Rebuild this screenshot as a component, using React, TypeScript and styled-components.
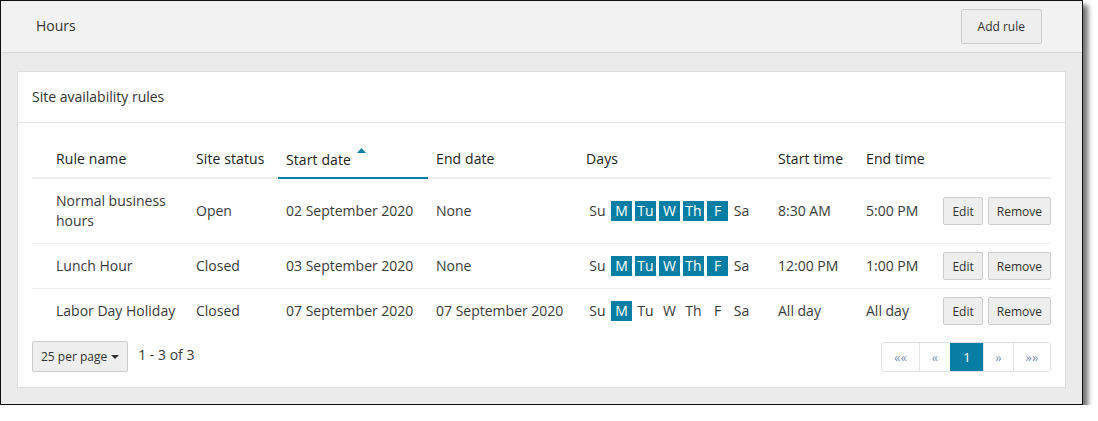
import React from "react";
import styled, { createGlobalStyle } from "styled-components";

const GlobalStyle = createGlobalStyle`
  html, body { margin: 0; padding: 0; background: #ffffff; }
  body { font-family: "Open Sans", "Noto Sans", Arial, sans-serif; color: #333; }
  * { box-sizing: border-box; }
`;

const TEAL = "#087ea4";

const Frame = styled.div`
  width: 1083px;
  height: 405px;
  border: 1px solid #111;
  background: #ebebeb;
  box-shadow: 5px 5px 5px rgba(0, 0, 0, 0.55);
  display: flex;
  flex-direction: column;
`;

const TopBar = styled.header`
  height: 52px;
  flex: none;
  background: #f2f2f2;
  border-bottom: 1px solid #d6d6d6;
  display: flex;
  align-items: center;
  justify-content: space-between;
  padding: 0 40px 1px 35px;
`;

const PageTitle = styled.h1`
  margin: 0 0 1px 0;
  font-size: 14px;
  font-weight: 400;
  color: #333;
`;

const Button = styled.button<{ $h?: number; $px?: number }>`
  height: ${(p) => p.$h ?? 28}px;
  padding: 0 ${(p) => p.$px ?? 8}px;
  background: #eeeeee;
  border: 1px solid #cccccc;
  border-radius: 2px;
  font-family: "Open Sans", Arial, sans-serif;
  font-size: 12px;
  color: #333;
  display: inline-flex;
  align-items: center;
  justify-content: center;
  gap: 4px;
  cursor: pointer;
`;

const Content = styled.main`
  flex: 1;
  padding: 18px 16px 16px 16px;
`;

const Card = styled.section`
  background: #fff;
  border: 1px solid #dedede;
`;

const CardHeader = styled.div`
  height: 51px;
  border-bottom: 1px solid #e6e6e6;
  display: flex;
  align-items: center;
  padding: 0 0 2px 14px;
  font-size: 14px;
  color: #333;
`;

const CardBody = styled.div`
  padding: 15px 14px 15px 14px;
`;

const Table = styled.table`
  width: 100%;
  border-collapse: collapse;
  table-layout: fixed;
  font-size: 14px;
`;

const Th = styled.th<{ $active?: boolean; $first?: boolean }>`
  text-align: left;
  font-weight: 400;
  color: #222;
  line-height: 20px;
  letter-spacing: 0.1px;
  padding: 10px 8px 7px ${(p) => (p.$first ? 24 : 8)}px;
  border-bottom: 2px solid ${(p) => (p.$active ? TEAL : "#eeeeee")};
  white-space: nowrap;
`;

const SortArrow = styled.svg`
  display: inline-block;
  width: 9px;
  height: 5px;
  margin-left: 6px;
  vertical-align: 12px;
`;

const Tr = styled.tr<{ $last?: boolean }>`
  border-bottom: ${(p) => (p.$last ? "none" : "1px solid #ececec")};
`;

const Td = styled.td<{ $first?: boolean }>`
  padding: 12px 8px 12px ${(p) => (p.$first ? 24 : 8)}px;
  line-height: 20px;
  color: #3a3a3a;
  vertical-align: middle;
`;

const ActionCell = styled.td`
  padding: 8px 0;
  vertical-align: middle;
`;

const Actions = styled.div`
  display: flex;
  justify-content: flex-end;
  gap: 5px;
`;

const DayList = styled.div`
  display: flex;
  gap: 3px;
  margin-left: 1px;
`;

const Day = styled.span<{ $on?: boolean }>`
  min-width: 21px;
  height: 20px;
  line-height: 20px;
  padding: 0 2px;
  text-align: center;
  background: ${(p) => (p.$on ? TEAL : "transparent")};
  color: ${(p) => (p.$on ? "#fff" : "#3a3a3a")};
`;

const Footer = styled.div`
  margin-top: 8px;
  display: flex;
  align-items: center;
  justify-content: space-between;
`;

const FooterLeft = styled.div`
  display: flex;
  align-items: center;
  gap: 10px;
`;

const Count = styled.span`
  font-size: 14px;
  color: #3a3a3a;
  margin-top: -4px;
`;

const Caret = styled.span`
  width: 0;
  height: 0;
  border-left: 4px solid transparent;
  border-right: 4px solid transparent;
  border-top: 4px solid #333;
  margin-left: 0;
`;

const Pager = styled.nav`
  display: flex;
  height: 30px;
  border: 1px solid #dde0e4;
  border-radius: 3px;
  overflow: hidden;
`;

const PageCell = styled.span<{ $active?: boolean; $w: number }>`
  width: ${(p) => p.$w}px;
  display: flex;
  align-items: center;
  justify-content: center;
  font-size: 13px;
  color: ${(p) => (p.$active ? "#fff" : "#7f9bbd")};
  background: ${(p) => (p.$active ? TEAL : "#fff")};
  border-left: 1px solid ${(p) => (p.$active ? TEAL : "#e3e5e8")};
  &:first-child { border-left: none; }
`;

const DAYS = ["Su", "M", "Tu", "W", "Th", "F", "Sa"];

type Rule = {
  name: string;
  status: string;
  start: string;
  end: string;
  days: boolean[];
  startTime: string;
  endTime: string;
};

const rules: Rule[] = [
  {
    name: "Normal business hours",
    status: "Open",
    start: "02 September 2020",
    end: "None",
    days: [false, true, true, true, true, true, false],
    startTime: "8:30 AM",
    endTime: "5:00 PM",
  },
  {
    name: "Lunch Hour",
    status: "Closed",
    start: "03 September 2020",
    end: "None",
    days: [false, true, true, true, true, true, false],
    startTime: "12:00 PM",
    endTime: "1:00 PM",
  },
  {
    name: "Labor Day Holiday",
    status: "Closed",
    start: "07 September 2020",
    end: "07 September 2020",
    days: [false, true, false, false, false, false, false],
    startTime: "All day",
    endTime: "All day",
  },
];

export default function App() {
  return (
    <>
      <GlobalStyle />
      <Frame>
        <TopBar>
          <PageTitle>Hours</PageTitle>
          <Button $h={35} $px={16}>Add rule</Button>
        </TopBar>
        <Content>
          <Card>
            <CardHeader>Site availability rules</CardHeader>
            <CardBody>
              <Table>
                <colgroup>
                  <col style={{ width: 156 }} />
                  <col style={{ width: 90 }} />
                  <col style={{ width: 150 }} />
                  <col style={{ width: 150 }} />
                  <col style={{ width: 192 }} />
                  <col style={{ width: 88 }} />
                  <col style={{ width: 77 }} />
                  <col />
                </colgroup>
                <thead>
                  <tr>
                    <Th $first>Rule name</Th>
                    <Th>Site status</Th>
                    <Th $active>
                      Start date
                      <SortArrow viewBox="0 0 9 5">
                        <polygon points="4.5,0 9,5 0,5" fill={TEAL} />
                      </SortArrow>
                    </Th>
                    <Th>End date</Th>
                    <Th>Days</Th>
                    <Th>Start time</Th>
                    <Th>End time</Th>
                    <Th />
                  </tr>
                </thead>
                <tbody>
                  {rules.map((r, i) => (
                    <Tr key={r.name} $last={i === rules.length - 1}>
                      <Td $first>{r.name}</Td>
                      <Td>{r.status}</Td>
                      <Td>{r.start}</Td>
                      <Td>{r.end}</Td>
                      <Td>
                        <DayList>
                          {DAYS.map((d, k) => (
                            <Day key={d} $on={r.days[k]}>
                              {d}
                            </Day>
                          ))}
                        </DayList>
                      </Td>
                      <Td>{r.startTime}</Td>
                      <Td>{r.endTime}</Td>
                      <ActionCell>
                        <Actions>
                          <Button>Edit</Button>
                          <Button>Remove</Button>
                        </Actions>
                      </ActionCell>
                    </Tr>
                  ))}
                </tbody>
              </Table>
              <Footer>
                <FooterLeft>
                  <Button $h={31} $px={8}>
                    25 per page
                    <Caret />
                  </Button>
                  <Count>1 - 3 of 3</Count>
                </FooterLeft>
                <Pager>
                  <PageCell $w={37}>««</PageCell>
                  <PageCell $w={31}>«</PageCell>
                  <PageCell $w={33} $active>1</PageCell>
                  <PageCell $w={30}>»</PageCell>
                  <PageCell $w={37}>»»</PageCell>
                </Pager>
              </Footer>
            </CardBody>
          </Card>
        </Content>
      </Frame>
    </>
  );
}
